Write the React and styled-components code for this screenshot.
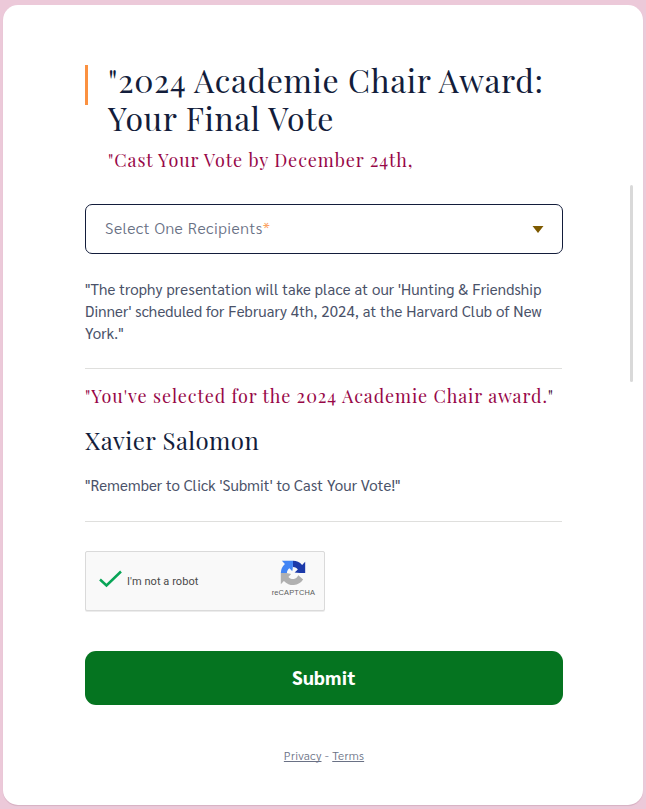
import React from "react";
import styled, { createGlobalStyle } from "styled-components";

const serif = '"Playfair Display", "Liberation Serif", serif';
const sans = 'Sarabun, "Noto Sans", sans-serif';

const GlobalStyle = createGlobalStyle`
  *, *::before, *::after { box-sizing: border-box; }
  html, body { margin: 0; background: #ecc9d9; overflow: hidden; }
  h1, h2, h3, p { margin: 0; font-weight: 400; }
`;

const Page = styled.main`
  height: 809px;
  padding: 5px 3px 4px;
  background: #ecc9d9;
`;

const Card = styled.form`
  position: relative;
  display: flex;
  flex-direction: column;
  height: 800px;
  padding: 56px 80px 0 82px;
  border-radius: 15px;
  background: #fff;
  box-shadow: 0 2px 0 -1px #d9b3c5, 0 1px 1px #d9b3c5;
`;

const ScrollThumb = styled.div`
  position: absolute;
  top: 180px;
  right: 10px;
  width: 3px;
  height: 197px;
  border-radius: 2px;
  background: #d9d9d9;
`;

const Header = styled.header`
  display: flex;
  gap: 20px;
`;

const Accent = styled.span`
  flex: none;
  width: 3px;
  height: 40px;
  margin-top: 4px;
  background: #fb9140;
`;

const Title = styled.h1`
  font: 400 32px/38px ${serif};
  letter-spacing: 0.02em;
  color: #131d3b;
`;

const TitleLine = styled.span`
  display: block;
  white-space: nowrap;
`;

const Notice = styled.h2`
  height: 24px;
  margin-top: ${(p) => p.$top}px;
  font: 400 18px/24px ${serif};
  letter-spacing: 0.05em;
  white-space: nowrap;
  color: #970747;
`;

const ClosingQuote = styled.span`
  color: #4d1240;
`;

const SelectField = styled.button`
  display: flex;
  align-items: center;
  justify-content: space-between;
  height: 50px;
  margin-top: 32px;
  padding: 0 18px 0 19px;
  border: 1px solid #131d3b;
  border-radius: 7px;
  background: #fff;
  font: 300 16px/24px ${sans};
  letter-spacing: 0.03em;
  color: #687084;
`;

const Placeholder = styled.span`
  padding-bottom: 2px;
`;

const Required = styled.span`
  color: #fba365;
`;

const Caret = styled.svg`
  width: 12px;
  height: 7px;
  fill: #7e5a00;
`;

const Body = styled.p`
  margin-top: ${(p) => p.$top}px;
  font: 400 15px/22px ${sans};
  letter-spacing: 0.01em;
  color: #4a5269;
`;

const BodyLine = styled.span`
  display: block;
  white-space: nowrap;
`;

const Divider = styled.hr`
  width: 477px;
  height: 1px;
  margin: ${(p) => p.$top}px 0 0;
  border: 0;
  background: #dfdfdd;
`;

const Recipient = styled.h3`
  height: 30px;
  margin-top: 17px;
  font: 400 24px/30px ${serif};
  letter-spacing: 0.02em;
  color: #131d3b;
`;

const Captcha = styled.div`
  display: flex;
  align-items: center;
  width: 240px;
  height: 60px;
  margin-top: 29px;
  padding: 0 9px 0 13px;
  border: 1px solid #dadada;
  border-radius: 2px;
  background: #f9f9f9;
  box-shadow: 0 1px 0 #ececec;
`;

const Check = styled.svg`
  width: 23px;
  height: 18px;
  margin: -5px 5px 0 0;
  fill: none;
  stroke: #08a557;
  stroke-width: 2.5;
`;

const CaptchaLabel = styled.span`
  flex: 1;
  padding-top: 1px;
  font: 400 11px/16px Roboto, sans-serif;
  letter-spacing: 0.06px;
  color: #4a4a4a;
`;

const Brand = styled.div`
  display: flex;
  flex-direction: column;
  align-items: center;
  gap: 2px;
  margin-top: -5px;
  font: 400 7.4px/10px "Liberation Sans", sans-serif;
  letter-spacing: 0.16px;
  color: #5c5c5c;
`;

const Logo = styled.svg`
  width: 26px;
  height: 26px;
`;

const Submit = styled.button`
  height: 54px;
  margin-top: 40px;
  padding: 0 0 2px;
  border: 0;
  border-radius: 11px;
  background: #057420;
  font: 800 19px/52px ${sans};
  letter-spacing: 0.02em;
  color: #fff;
`;

const Footer = styled.footer`
  margin-top: 40px;
  text-align: center;
  font: 300 12px/20px ${sans};
  letter-spacing: 0.02em;
  color: #6a7185;
`;

const FooterLink = styled.a`
  color: inherit;
  text-decoration: underline;
  text-decoration-skip-ink: none;
`;

export default function App() {
  return (
    <>
      <GlobalStyle />
      <Page>
        <Card>
          <Header>
            <Accent />
            <div>
              <Title>
                <TitleLine>"2024 Academie Chair Award:</TitleLine>
                <TitleLine>Your Final Vote</TitleLine>
              </Title>
              <Notice $top={11}>"Cast Your Vote by December 24th,</Notice>
            </div>
          </Header>
          <SelectField type="button">
            <Placeholder>
              Select One Recipients<Required>*</Required>
            </Placeholder>
            <Caret viewBox="0 0 12 7">
              <path d="M.5 0h11L6 7z" />
            </Caret>
          </SelectField>
          <Body $top={24}>
            <BodyLine>"The trophy presentation will take place at our 'Hunting &amp; Friendship</BodyLine>
            <BodyLine>Dinner' scheduled for February 4th, 2024, at the Harvard Club of New</BodyLine>
            <BodyLine>York."</BodyLine>
          </Body>
          <Divider $top={24} />
          <Notice $top={15}>
            "You've selected for the 2024 Academie Chair award.<ClosingQuote>"</ClosingQuote>
          </Notice>
          <Recipient>Xavier Salomon</Recipient>
          <Body $top={19}>"Remember to Click 'Submit' to Cast Your Vote!"</Body>
          <Divider $top={25} />
          <Captcha>
            <Check viewBox="0 0 23 18">
              <path d="M1 9.5 7.5 15.5 22 1.5" />
            </Check>
            <CaptchaLabel>I'm not a robot</CaptchaLabel>
            <Brand>
              <Logo viewBox="0 0 64 64">
                <path fill="#1c3aa9" d="M62 32V4.500l-7.600 7.600A30 30 0 0 0 31.900 2v15c6 0 9.500 3 12 6.200L36 30.500c8 1.500 17 1.500 26 1.500Z" />
                <path fill="#4285f4" d="M32 2H4.500l7.600 7.600A30 30 0 0 0 2 32h15c0-6 3-9.500 6.200-12l7 7.500C32 20 32 11 32 2Z" />
                <path fill="#b0b0b0" d="M2 32v27.500l7.600-7.600A30 30 0 0 0 57 48L45 37.500A14.500 14.500 0 0 1 20.700 41.900l6.700-7.500C20 32 12 32 2 32Z" />
              </Logo>
              <span>reCAPTCHA</span>
            </Brand>
          </Captcha>
          <Submit type="submit">Submit</Submit>
          <Footer>
            <FooterLink>Privacy</FooterLink> - <FooterLink>Terms</FooterLink>
          </Footer>
          <ScrollThumb />
        </Card>
      </Page>
    </>
  );
}
